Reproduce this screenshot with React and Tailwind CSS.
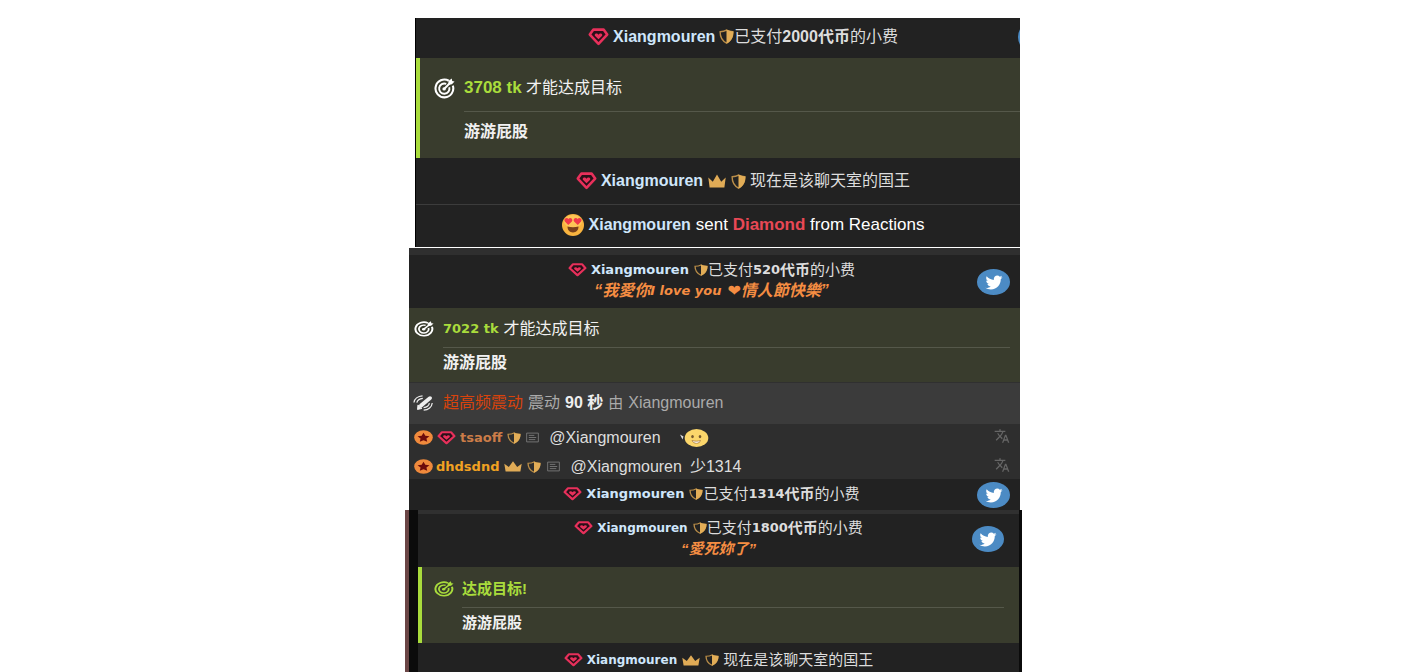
import React from 'react';
import { FaTwitter } from 'react-icons/fa';
import { MdTranslate } from 'react-icons/md';

const Gem = ({ className = 'w-[19px] h-[14px]' }) => (
    <svg viewBox="0 0 21 18" preserveAspectRatio="none" className={`shrink-0 ${className}`} aria-hidden="true">
        <path d="M5.4 1.6h10.2l3.6 5-8.7 9.2-8.7-9.2z" fill="#2a1019" stroke="#e8305b" strokeWidth="2.6" strokeLinejoin="round" />
        <path d="M10.5 11.2 7.1 8c-.8-.9-.3-2.5 1.1-2.5 1.1 0 1.8.5 2.3 1.2.5-.7 1.2-1.2 2.3-1.2 1.4 0 1.9 1.6 1.1 2.5z" fill="#e8305b" />
    </svg>
);

const Shield = ({ className = 'w-[14px] h-[12px]' }) => (
    <svg viewBox="0 0 16 16" preserveAspectRatio="none" className={`shrink-0 ${className}`} aria-hidden="true">
        <path d="M8 1.2C6 2.4 3.5 2.900 1.2 3c0 5.600 1.800 9.600 6.800 12 5-2.400 6.800-6.400 6.800-12C12.500 2.900 10 2.400 8 1.200z" fill="none" stroke="#b98d48" strokeWidth="1.500" />
        <path d="M8 .6c2 1.300 4.700 1.900 7.400 2 0 6-2.200 10.500-7.400 13z" fill="#e2ad57" />
    </svg>
);

const Crown = ({ className = 'w-[18px] h-[11px]' }) => (
    <svg viewBox="0 0 18 14" preserveAspectRatio="none" className={`shrink-0 ${className}`} aria-hidden="true">
        <path d="M1.600 13.500.3 3.600l4.500 4.100L9 .4l4.200 7.300 4.500-4.100-1.300 9.900z" fill="#e0ab56" />
    </svg>
);

const Target = ({ className }) => (
    <svg viewBox="0 0 22 22" preserveAspectRatio="none" className={`shrink-0 ${className}`} fill="none" stroke="currentColor" aria-hidden="true">
        <path d="M15.500 2.900A9.300 9.300 0 1 0 19.700 8" strokeWidth="2.200" />
        <path d="M12.800 6.100A5.400 5.400 0 1 0 16 9.700" strokeWidth="2" />
        <path d="M10.600 11.500 17 5" strokeWidth="2" />
        <path d="m15 5.600.4-2.600L18.600.5l.5 2.600 2.400.5-2.700 3-2.800.4z" fill="currentColor" stroke="none" />
        <circle cx="10.600" cy="11.400" r="1.800" fill="currentColor" stroke="none" />
    </svg>
);

const Toy = () => (
    <svg viewBox="0 0 21 18" preserveAspectRatio="none" className="w-5 h-4 shrink-0" fill="none" stroke="#eee" aria-hidden="true">
        <path d="M8.500 11.800 17.800 3.500" strokeWidth="4.200" strokeLinecap="round" />
        <path d="m5.200 11.200 4.300 3.900-4.800 1.200z" fill="#eee" strokeWidth="1" />
        <path d="M1 8.500C1.400 4.500 5 1.400 10 1M4 8.600C4.500 6.200 7 4.200 10.300 3.800" strokeWidth="1.300" />
        <path d="M20.200 9c-.4 4.500-4 7.800-9 8M17.200 9.200c-.5 2.900-3 4.800-6.100 5" strokeWidth="1.300" />
    </svg>
);

const StarBadge = () => (
    <svg viewBox="0 0 20 20" preserveAspectRatio="none" className="w-[19px] h-[15px] shrink-0" aria-hidden="true">
        <circle cx="10" cy="10" r="9.800" fill="#f08a3c" />
        <path d="m10 3.800 1.900 4 4.400.5-3.200 3 .8 4.400-3.900-2.200-3.900 2.200.8-4.400-3.200-3 4.400-.5z" fill="#6d0c0c" />
    </svg>
);

const Note = () => (
    <svg viewBox="0 0 14 12" preserveAspectRatio="none" className="w-[13px] h-[11px] shrink-0" fill="none" stroke="#777" aria-hidden="true">
        <path d="M.7 1.200h12.600v9.600H.7zM3 3.700h6M3 6h8M3 8.300h7" />
    </svg>
);

const HeartEyes = () => (
    <svg viewBox="0 0 22 22" className="size-[22px] shrink-0" role="img" aria-label="heart eyes">
        <circle cx="11" cy="11" r="11" fill="#f9b43f" />
        <ellipse cx="11" cy="7.500" rx="9" ry="6.500" fill="#fdc556" />
        <path d="M6.200 11 2.900 7.600c-1-1.300-.3-3.600 1.600-3.600.9 0 1.500.4 1.900 1 .5-.7 1.100-1.200 2-1.100 2 .1 2.400 2.400 1.500 3.700z" fill="#f0384a" />
        <path d="m15.800 11-3.700-3.400c-.9-1.300-.5-3.600 1.500-3.700.9-.1 1.500.4 2 1.100.4-.6 1-1 1.900-1 1.900 0 2.600 2.300 1.600 3.600z" fill="#f0384a" />
        <path d="M5.500 12.600c3.600.9 7.400.9 11 0 0 3.600-2.100 5.900-5.500 5.900s-5.500-2.300-5.500-5.900z" fill="#79401b" />
    </svg>
);

const Smiley = () => (
    <svg viewBox="0 0 30 18" preserveAspectRatio="none" className="w-[30px] h-[18px] shrink-0" role="img" aria-label="smile">
        <path d="m1 5.500 3.500 2-1 3z" fill="#ddd" />
        <ellipse cx="17.500" cy="9" rx="11.800" ry="8.900" fill="#fbd66b" />
        <ellipse cx="13.500" cy="7.600" rx="1.300" ry="1.600" fill="#75572d" />
        <ellipse cx="21" cy="7.600" rx="1.300" ry="1.600" fill="#75572d" />
        <path d="M13 11.500c2.800.9 5.800.9 8.500 0-.8 3.700-7.200 3.700-8.500 0z" fill="#fff" stroke="#a87838" strokeWidth=".8" />
    </svg>
);

const TwitterLink = ({ className }) => (
    <a href="#share" aria-label="Share on Twitter" className={`absolute flex items-center justify-center rounded-[50%] bg-[#4c8bc4] text-white ${className}`}>
        <FaTwitter className="w-[20px] h-[17px]" />
    </a>
);

const TranslateButton = () => (
    <button type="button" aria-label="Translate" className="ml-auto pb-1 text-[#666]">
        <MdTranslate className="size-4" />
    </button>
);

const Name = () => <b className="text-[#cfe6fb]">Xiangmouren</b>;

const SmallName = ({ className = 'text-[13px]' }) => (
    <b className={`font-['DejaVu_Sans'] text-[#cfe6fb] ${className}`}>Xiangmouren</b>
);

const SmallTip = ({ amount, nameClass }) => (
    <p className="flex h-5 items-center justify-center whitespace-nowrap text-[15px] text-[#ddd]">
        <Gem className="mr-1 w-[19px] h-[14px]" />
        <SmallName className={nameClass} />
        <Shield className="ml-[5px] w-[14px] h-[12px]" />
        <span>已支付</span>
        <b className="font-['DejaVu_Sans'] text-[13px]">{amount}</b>
        <b>代币</b>
        <span>的小费</span>
    </p>
);

const App = () => {
    return (
        <main className="min-h-screen bg-white pl-[11px] font-['Liberation_Sans','Noto_Sans_CJK_SC',sans-serif]">
            <div className="mx-auto w-full max-w-[617px] pt-[18px]">
                <section className="relative ml-[10px] mr-[2px] mb-px overflow-hidden border-l border-black bg-[#222] text-base leading-6 text-[#ddd]">
                    <div className="relative flex h-10 items-center justify-center pb-[3px] pl-[50px] whitespace-nowrap">
                        <Gem className="mr-1 w-[21px] h-[18px]" />
                        <Name />
                        <Shield className="ml-1 w-[15px] h-[15px]" />
                        <span>已支付<b>2000代币</b>的小费</span>
                        <TwitterLink className="-right-[30px] top-[3px] size-8" />
                    </div>
                    <div className="flex gap-[9px] border-l-4 border-[#a9dc3c] bg-[#393c2d] pt-[18px] pb-[14px] pl-[14px]">
                        <Target className="mt-[2px] size-[21px] text-white" />
                        <div className="flex-1">
                            <p className="border-b border-[#55584a] pb-[11px] text-[#f1f1f1]">
                                <b className="text-[17px] text-[#a9dc3c]">3708 tk</b> 才能达成目标
                            </p>
                            <p className="pt-2 font-bold text-[#f1f1f1]">游游屁股</p>
                        </div>
                    </div>
                    <div className="flex h-[47px] items-center justify-center border-b border-[#3c3c3c] pl-[50px] whitespace-nowrap">
                        <Gem className="mr-1 w-[21px] h-[18px]" />
                        <Name />
                        <Crown className="ml-[5px] w-[18px] h-[14px]" />
                        <Shield className="ml-[5px] mr-1 w-[15px] h-[15px]" />
                        <span>现在是该聊天室的国王</span>
                    </div>
                    <div className="flex h-[42px] items-center justify-center pb-[3px] pl-[50px] whitespace-nowrap text-[17px] text-white">
                        <span className="mr-[5px]"><HeartEyes /></span>
                        <span className="text-base"><Name /></span>
                        <span className="ml-[5px]">sent <b className="text-[#e84855]">Diamond</b> from Reactions</span>
                    </div>
                </section>

                <section className="ml-1 mr-[2px] bg-[#222] text-base leading-5 text-[#ddd]">
                    <div className="relative h-[60px] border-t-[7px] border-[#2f2f2f] pt-[5px] pr-[6px]">
                        <SmallTip amount="520" />
                        <p className="flex h-[22px] items-center justify-center whitespace-nowrap text-base font-bold italic text-[#f58d42]">
                            <span>“我愛你</span>
                            <span className="font-['DejaVu_Sans'] text-[13px]">I love you</span>
                            <span className="ml-1.5 font-['DejaVu_Sans']">❤</span>
                            <span>情人節快樂”</span>
                        </p>
                        <TwitterLink className="right-[10px] top-[14px] w-[33px] h-[26px]" />
                    </div>
                    <div className="flex gap-[9px] bg-[#393c2d] pt-[11px] pr-[10px] pb-[9px] pl-[5px]">
                        <Target className="mt-[2px] w-[20px] h-[16px] text-white" />
                        <div className="flex-1">
                            <p className="flex h-[29px] gap-[5px] border-b border-[#55584a] text-[#f1f1f1]">
                                <b className="font-['DejaVu_Sans'] text-[13px] text-[#a9dc3c]">7022 tk</b>
                                <span>才能达成目标</span>
                            </p>
                            <p className="pt-[5px] font-bold text-[#f1f1f1]">游游屁股</p>
                        </div>
                    </div>
                    <div className="flex h-[42px] items-center gap-[5px] border-t border-[#303030] bg-[#3b3b3b] pb-[2px] pl-1 whitespace-nowrap text-[#aaa]">
                        <span className="mr-[5px]"><Toy /></span>
                        <span className="text-[#d8430c]">超高频震动</span>
                        <span>震动</span>
                        <b className="text-[#eee]">90 秒</b>
                        <span className="text-[15px]">由</span>
                        <span>Xiangmouren</span>
                    </div>
                    <div className="bg-[#2e2e2e] text-base whitespace-nowrap">
                        <div className="flex h-[27px] items-center pl-[5px] pr-[10px]">
                            <StarBadge />
                            <Gem className="mx-1 w-[19px] h-[14px]" />
                            <b className="font-['DejaVu_Sans'] text-[13px] text-[#cb7c48]">tsaoff</b>
                            <Shield className="mx-[5px] w-[14px] h-[12px]" />
                            <Note />
                            <span className="ml-[10px]">@Xiangmouren</span>
                            <span className="ml-[18px]"><Smiley /></span>
                            <TranslateButton />
                        </div>
                        <div className="flex h-7 items-center pl-[5px] pr-[10px] pt-[3px]">
                            <StarBadge />
                            <b className="ml-[3px] font-['DejaVu_Sans'] text-[13px] text-[#f2a222]">dhdsdnd</b>
                            <Crown className="mx-[5px] w-[18px] h-[11px]" />
                            <Shield className="mr-[6px] w-[14px] h-[12px]" />
                            <Note />
                            <span className="ml-[10px]">@Xiangmouren</span>
                            <span className="ml-2">少1314</span>
                            <TranslateButton />
                        </div>
                    </div>
                    <div className="relative h-[31px] pt-[5px] pr-[6px]">
                        <SmallTip amount="1314" />
                        <TwitterLink className="right-[10px] top-[3px] w-[33px] h-[26px]" />
                    </div>
                </section>

                <section className="border-l-4 border-[#6b4646] bg-[#0b0b0b] pl-[9px] pr-[3px] text-[15px] leading-5 text-[#ddd]">
                    <div className="bg-[#222]">
                        <div className="relative h-[57px] border-t-[4px] border-[#303030] pt-1">
                            <SmallTip amount="1800" nameClass="text-[12px]" />
                            <p className="h-[22px] text-center font-bold italic leading-[22px] text-[#f58d42]">“愛死妳了”</p>
                            <TwitterLink className="right-[15px] top-[12px] w-8 h-[26px]" />
                        </div>
                        <div className="flex gap-2 border-l-4 border-[#a9dc3c] bg-[#393c2d] pt-3 pr-[15px] pb-[10px] pl-3">
                            <Target className="mt-[2px] w-[20px] h-[16px] text-[#a9dc3c]" />
                            <div className="flex-1">
                                <p className="h-[29px] border-b border-[#55584a] font-bold text-[#a9dc3c]">达成目标!</p>
                                <p className="pt-[5px] font-bold text-[#f1f1f1]">游游屁股</p>
                            </div>
                        </div>
                        <div className="flex h-[29px] items-center justify-center whitespace-nowrap pt-[5px]">
                            <Gem className="mr-1 w-[19px] h-[14px]" />
                            <SmallName className="text-[12px]" />
                            <Crown className="ml-[5px] w-[18px] h-[11px]" />
                            <Shield className="ml-[5px] mr-1 w-[14px] h-[12px]" />
                            <span>现在是该聊天室的国王</span>
                        </div>
                    </div>
                </section>
            </div>
        </main>
    );
};

export default App;
